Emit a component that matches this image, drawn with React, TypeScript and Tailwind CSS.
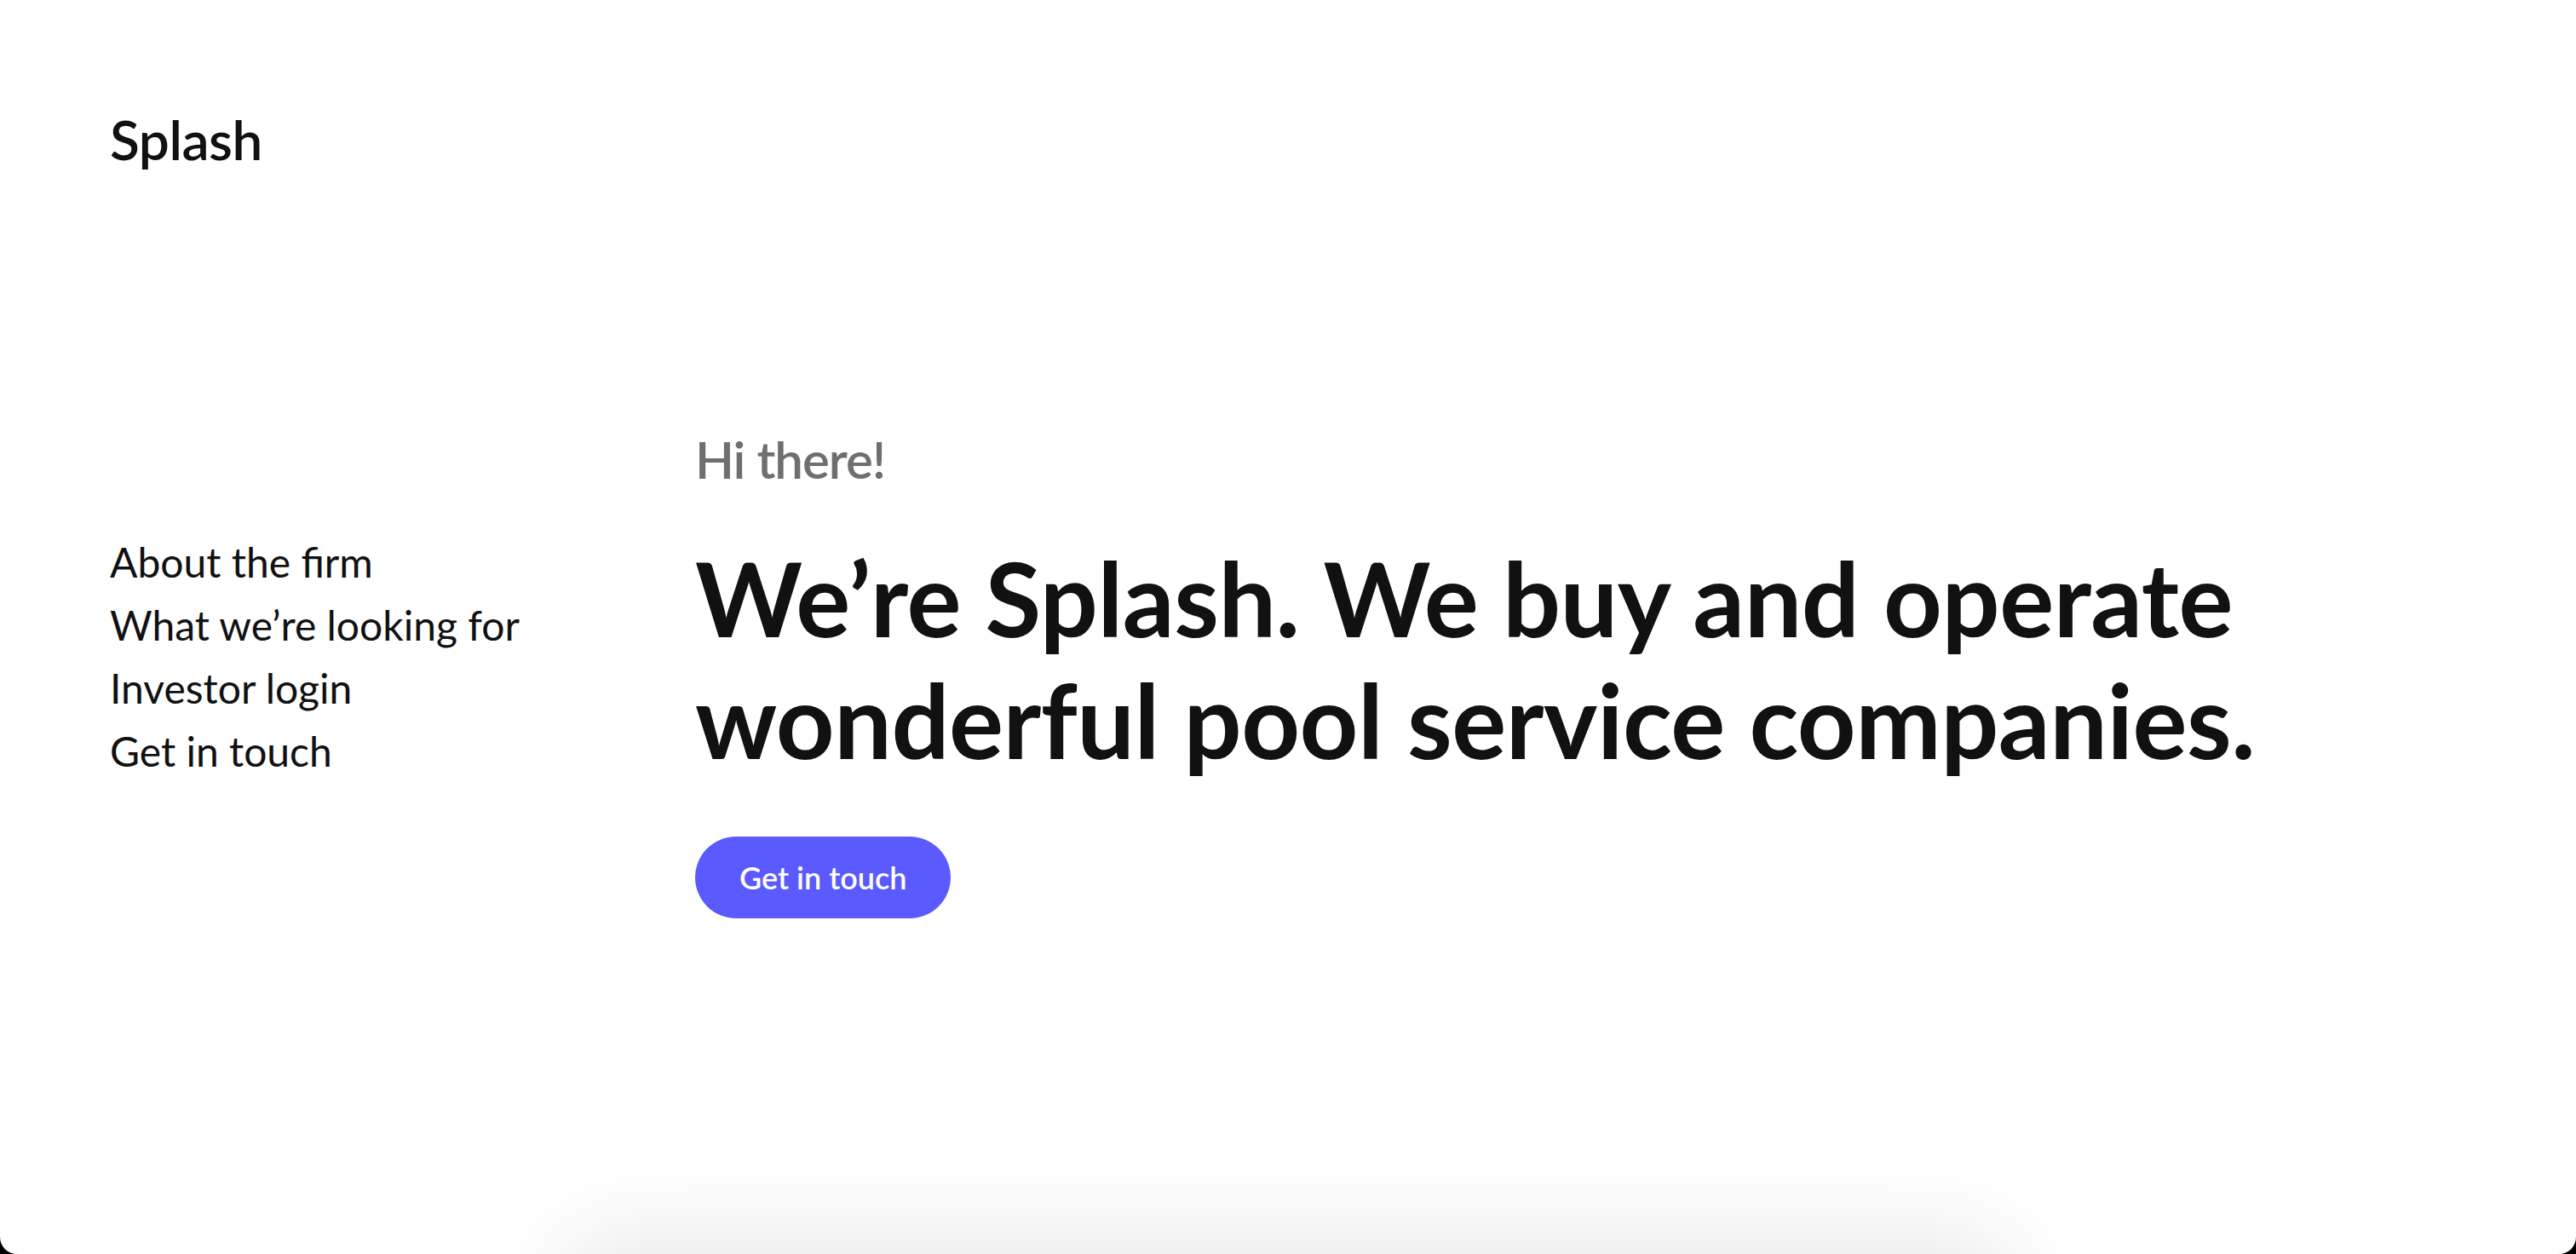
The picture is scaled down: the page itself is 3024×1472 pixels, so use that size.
import React from "react";

const font = { fontFamily: "Lato, 'Noto Sans', sans-serif" };

export default function App() {
  return (
    <div className="w-[3024px] h-[1472px] bg-black overflow-hidden" style={font}>
      <div className="h-[1472px] bg-white rounded-b-[20px] overflow-hidden flex flex-col">
        <header className="h-[328px] shrink-0 px-[129px] pt-[128px]">
          <div className="text-[64px] leading-[72px] font-semibold text-[#111111] tracking-[-0.5px]">Splash</div>
        </header>
        <main className="flex h-[1150px] shrink-0 px-[129px]">
          <nav className="w-[687px] pt-[295px] flex flex-col">
            {["About the firm", "What we’re looking for", "Investor login", "Get in touch"].map((t) => (
              <a key={t} className="text-[48px] leading-[74px] text-[#111111]">{t}</a>
            ))}
          </nav>
          <section className="flex flex-col items-start pt-[175px]">
            <p className="text-[60px] leading-[72px] font-semibold text-[#6f6f6f] tracking-[-1px]">Hi there!</p>
            <h1 className="mt-[56px] text-[120px] leading-[143px] font-bold text-[#111111] tracking-[-0.5px]">
              We’re Splash. We buy and operate
              <br />
              wonderful pool service companies.
            </h1>
            <button className="mt-[65px] h-[96px] px-[52px] rounded-full bg-[#5a5aff] text-white text-[36px] font-semibold">
              Get in touch
            </button>
          </section>
        </main>
        <div className="mx-auto w-[1650px] h-[400px] shrink-0 bg-white rounded-[40px] shadow-[0_0_110px_30px_rgba(0,0,0,0.09)]" />
      </div>
    </div>
  );
}
